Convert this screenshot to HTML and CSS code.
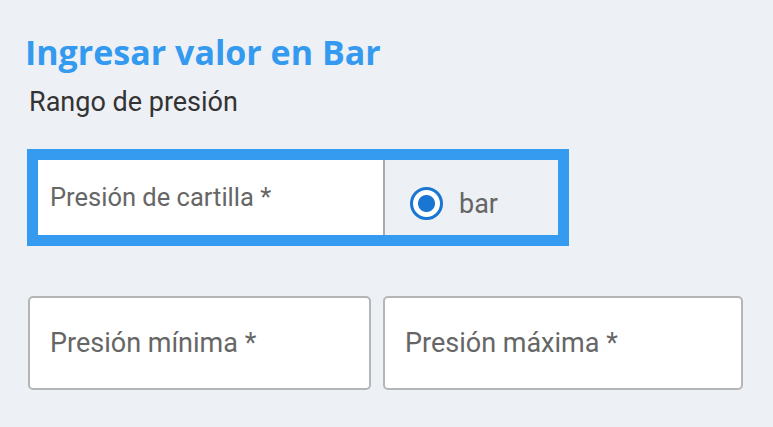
FILE: index.html
```html
<!DOCTYPE html>
<html lang="es">
<head>
    <meta charset="UTF-8">
    <meta name="viewport" content="width=device-width, initial-scale=1.0">
    <title>Ingresar valor en Bar</title>
    <link rel="stylesheet" href="styles.css">
</head>
<body>
    <div class="panel">
        <h2 class="panel-title">Ingresar valor en Bar</h2>
        <p class="panel-subtitle">Rango de presión</p>

        <div class="unit-field">
            <label class="unit-input" for="cartilla">
                <span class="field-label">Presión de cartilla *</span>
            </label>
            <div class="unit-addon">
                <span class="radio checked"></span>
                <span class="unit-name">bar</span>
            </div>
        </div>

        <div class="range-row">
            <div class="range-box range-min">
                <span class="field-label">Presión mínima *</span>
            </div>
            <div class="range-box range-max">
                <span class="field-label">Presión máxima *</span>
            </div>
        </div>
    </div>
</body>
</html>
```

FILE: styles.css
```css
body {
    margin: 0;
    background-color: #edf0f4;
    font-family: Roboto, "Liberation Sans", sans-serif;
}
.panel {
    padding: 29px 0 0 27px;
}
.panel-title {
    margin: 0 0 0 -2px;
    font-family: "Open Sans", sans-serif;
    font-weight: bold;
    font-size: 34px;
    line-height: 46px;
    color: #339af0;
}
.panel-subtitle {
    margin: 12px 0 0 2px;
    font-size: 27px;
    line-height: 30px;
    color: #333;
}
.unit-field {
    display: flex;
    width: 520px;
    height: 75px;
    margin-top: 32px;
    border: 11px solid #349bf0;
}
.unit-input {
    width: 333px;
    padding: 22px 0 0 12px;
    background-color: #fff;
    border-right: 2px solid #aaa;
}
.unit-input .field-label {
    font-size: 25.5px;
}
.field-label {
    font-size: 27px;
    color: #666;
}
.unit-addon {
    flex: 1;
    display: flex;
    align-items: center;
    padding: 12px 0 0 25px;
    box-sizing: border-box;
}
.radio {
    width: 27px;
    height: 27px;
    border: 3px solid #1976d2;
    border-radius: 50%;
    background: radial-gradient(circle, #1976d2 0 8px, #fff 9px);
}
.unit-name {
    margin-left: 16px;
    font-size: 27px;
    color: #666;
}
.range-row {
    display: flex;
    gap: 12px;
    width: 715px;
    margin: 50px 0 0 1px;
}
.range-box {
    height: 90px;
    display: flex;
    align-items: center;
    padding-left: 20px;
    background-color: #fff;
    border: 2px solid #b5b5b5;
    border-radius: 5px;
}
.range-min {
    width: 319px;
}
.range-max {
    flex: 1;
}
```
